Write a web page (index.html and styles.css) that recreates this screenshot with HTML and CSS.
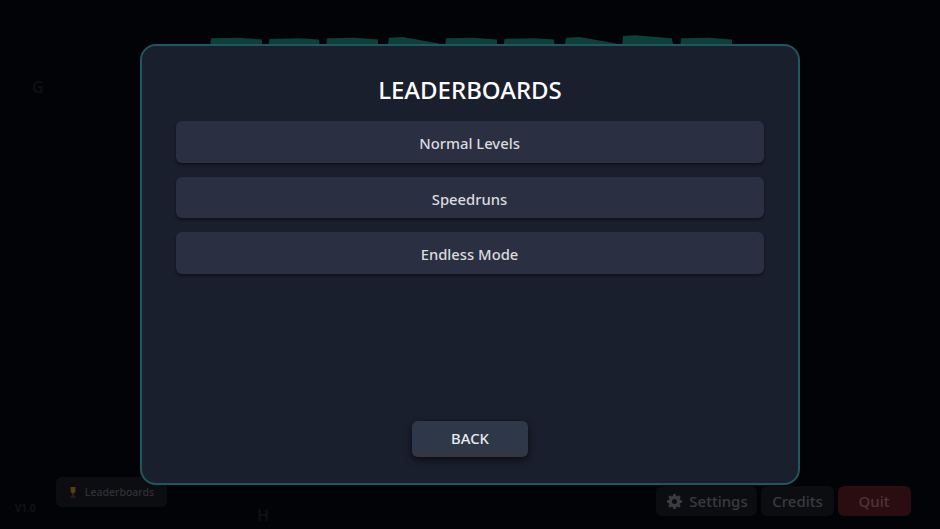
FILE: index.html
```html
<!DOCTYPE html>
<html lang="en">
<head>
<meta charset="utf-8">
<title>Leaderboards</title>
<link rel="stylesheet" href="styles.css">
</head>
<body>
<div class="stage">
  <div class="backdrop">
    <div class="tabs">
      <span class="tab"></span><span class="tab tab-b"></span><span class="tab"></span><span class="tab tab-c"></span><span class="tab"></span><span class="tab tab-b"></span><span class="tab tab-c"></span><span class="tab tab-d"></span><span class="tab"></span>
    </div>
    <span class="ghost-letter ghost-l">G</span>
    <span class="ghost-letter ghost-h">H</span>
    <span class="version">V1.0</span>
    <div class="corner-left">
      <div class="chip chip-lead">
        <svg class="trophy" viewBox="0 0 10 16" aria-hidden="true"><path d="M2 1h6v5a3 3 0 0 1-6 0z" fill="#5a3c14"/><rect x="4" y="9" width="2" height="3" fill="#3f2a10"/><rect x="2" y="12" width="6" height="3" fill="#2e1a14"/></svg>
        <span>Leaderboards</span>
      </div>
    </div>
    <div class="corner-right">
      <div class="chip chip-big chip-settings">
        <svg class="gear" viewBox="0 0 24 24" aria-hidden="true"><path fill="#3a3c41" fill-rule="evenodd" d="M10 1h4l.6 3.100 1.900.8L19.100 3 22 5.900l-1.900 2.600.8 1.900L24 11v4l-3.100.6-.8 1.900 1.900 2.600L19.100 23l-2.600-1.900-1.900.8L14 25h-4l-.6-3.100-1.900-.8L4.900 23 2 20.100l1.900-2.600-.8-1.900L0 15v-4l3.100-.6.8-1.900L2 5.900 4.900 3l2.600 1.900 1.900-.8zM12 9a4 4 0 1 0 0 8 4 4 0 0 0 0-8z" transform="translate(0 -1)"/></svg>
        <span>Settings</span>
      </div>
      <div class="chip chip-big chip-credits">Credits</div>
      <div class="chip chip-big chip-quit">Quit</div>
    </div>
  </div>
  <main class="modal">
    <h1 class="title">LEADERBOARDS</h1>
    <div class="list">
      <button class="row">Normal Levels</button>
      <button class="row">Speedruns</button>
      <button class="row">Endless Mode</button>
    </div>
    <button class="back">BACK</button>
  </main>
</div>
</body>
</html>
```
FILE: styles.css
```css
* { box-sizing: border-box; }
html, body { margin: 0; height: 100%; }
body { background: #020307; font-family: "Noto Sans", "Open Sans", sans-serif; overflow: hidden; }

.stage {
  position: relative;
  width: 940px;
  height: 529px;
  display: flex;
  align-items: flex-start;
  justify-content: center;
  padding-top: 44px;
  background: #020307;
}

.backdrop { position: absolute; inset: 0; }

.tabs {
  position: absolute;
  left: 210px;
  top: 35px;
  display: flex;
}
.tab {
  display: block;
  width: 52px;
  height: 14px;
  margin-right: 6px;
  background: #0c4038;
  clip-path: polygon(2% 24%, 55% 20%, 100% 32%, 100% 100%, 0 100%);
  filter: blur(0.4px);
}
.tab-b { clip-path: polygon(3% 28%, 60% 24%, 98% 32%, 100% 100%, 0 100%); }
.tab-c { margin-left: 3px; clip-path: polygon(4% 20%, 30% 14%, 100% 60%, 100% 100%, 0 100%); }
.tab-d { clip-path: polygon(2% 8%, 25% 2%, 96% 24%, 100% 100%, 0 100%); }

.ghost-letter {
  position: absolute;
  color: #0e1014;
  font-size: 16px;
  font-weight: 600;
  line-height: 1;
}
.ghost-l { left: 32px; top: 79px; }
.ghost-h { left: 257px; top: 507px; }

.version {
  position: absolute;
  left: 15px;
  top: 502px;
  font-size: 10px;
  line-height: 12px;
  font-weight: 600;
  color: #131519;
}

.corner-left { position: absolute; left: 56px; top: 477px; }
.corner-right {
  position: absolute;
  left: 656px;
  top: 486px;
  display: flex;
  gap: 4px;
}

.chip {
  display: flex;
  align-items: center;
  justify-content: center;
  background: #0c0d11;
  border-radius: 6px;
  color: #3a3b40;
}
.chip-lead {
  width: 111px;
  height: 30px;
  gap: 8px;
  font-size: 10.500px;
  font-weight: 500;
  color: #303136;
}
.trophy { width: 8px; height: 13px; }
.chip-big { height: 30px; font-size: 15px; font-weight: 500; }
.chip-settings { width: 101px; gap: 7px; padding-left: 2px; }
.gear { width: 15px; height: 15px; }
.chip-credits { width: 73px; }
.chip-quit { width: 73px; background: #2a0d10; color: #4e3538; padding-right: 1px; }

.modal {
  position: relative;
  width: 660px;
  height: 441px;
  padding: 27px 34px 26px;
  display: flex;
  flex-direction: column;
  align-items: center;
  background: #1a1f2d;
  border: 2px solid #1e585c;
  border-radius: 16px;
}

.title {
  margin: 0 0 15px;
  color: #fff;
  font-size: 24px;
  line-height: 33px;
  font-weight: 500;
  letter-spacing: 0;
}

.list {
  width: 100%;
  display: flex;
  flex-direction: column;
  gap: 14px;
}

.row {
  display: block;
  width: 100%;
  height: 41.500px;
  border: 0;
  border-radius: 6px;
  background: #2a2f41;
  box-shadow: 0 2px 3px rgba(6, 8, 14, 0.55);
  color: #dadbdf;
  font: 500 14.800px/20px "Noto Sans", "Open Sans", sans-serif;
  padding: 3px 1px 0 0;
}

.back {
  margin-top: auto;
  width: 116px;
  height: 36px;
  border: 0;
  border-radius: 6px;
  background: linear-gradient(#2f3848 0, #2f3848 80%, #33363f 100%);
  box-shadow: 0 3px 7px rgba(4, 5, 10, 0.7);
  color: #e9ebef;
  font: 500 14.800px/20px "Noto Sans", "Open Sans", sans-serif;
  padding: 0 0 3px;
}
```
